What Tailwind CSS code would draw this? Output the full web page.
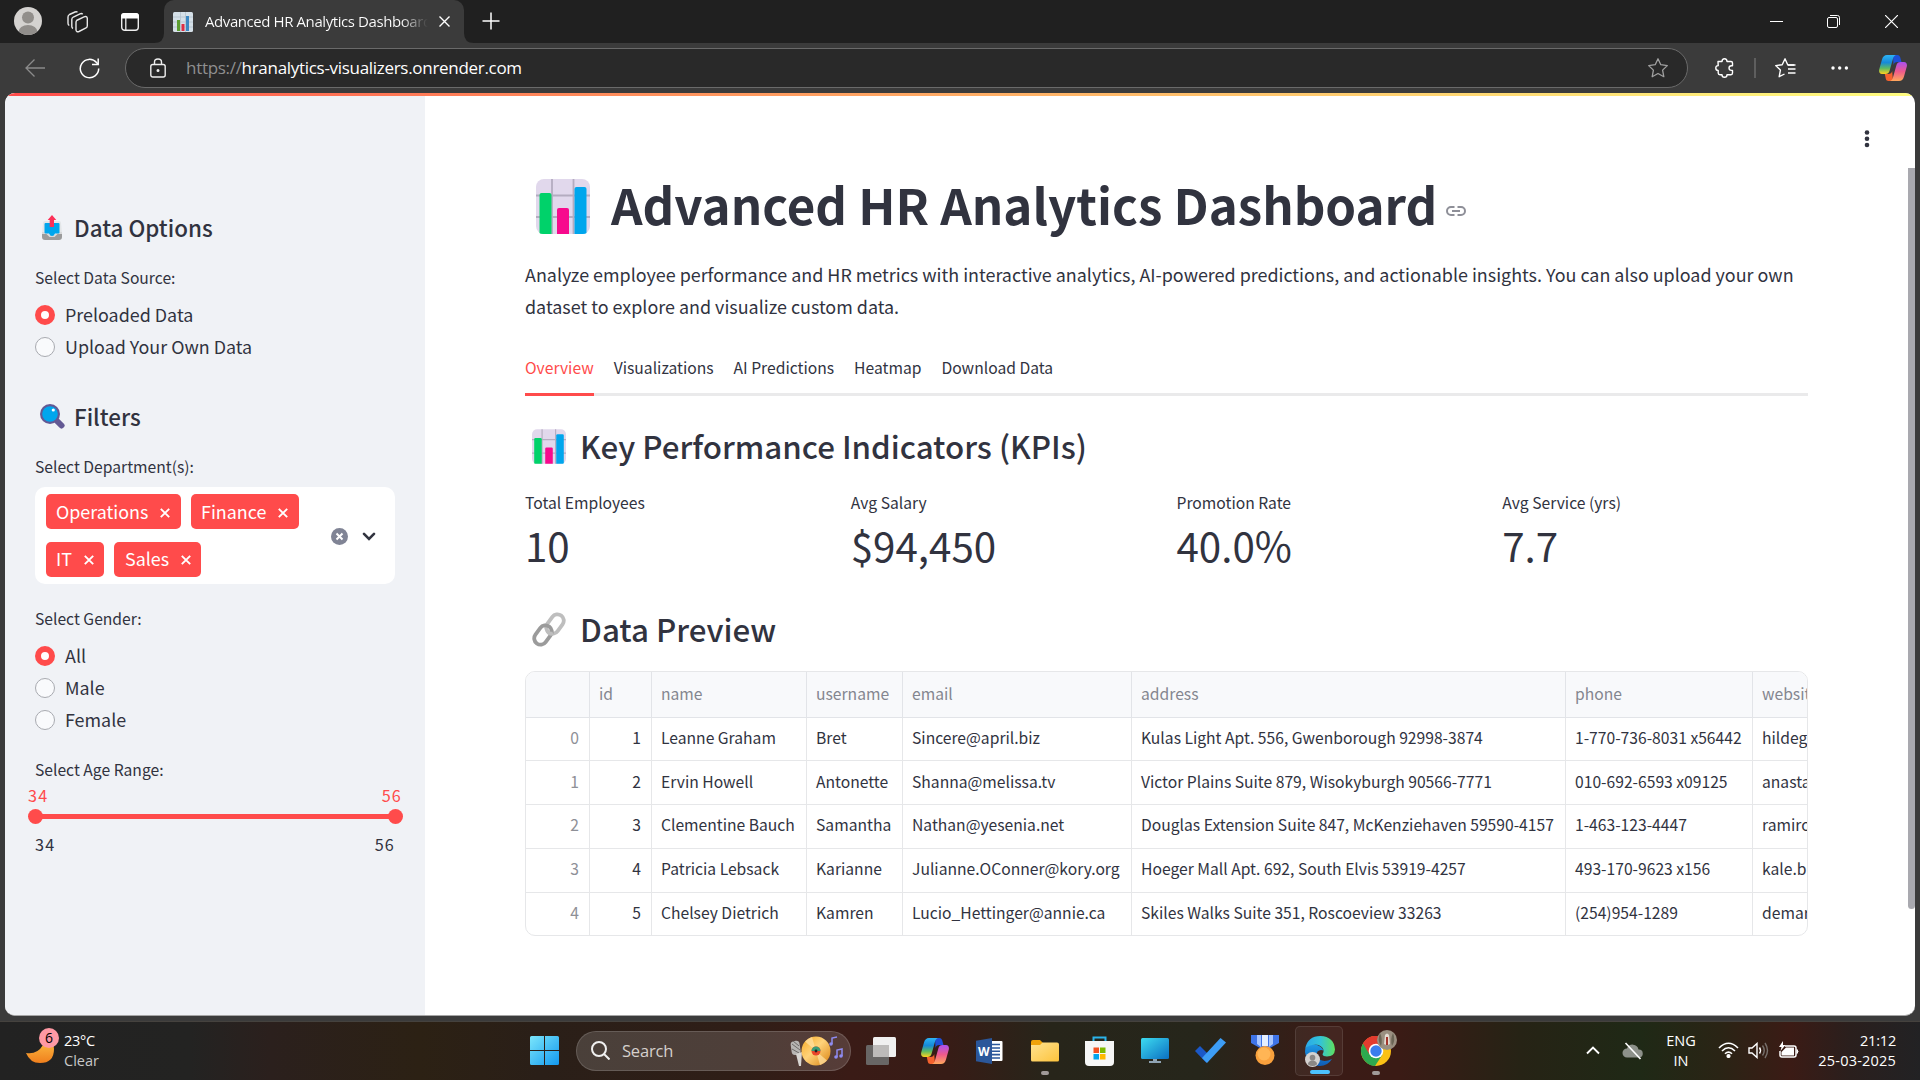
<!DOCTYPE html>
<html lang="en">
<head>
<meta charset="utf-8">
<title>Advanced HR Analytics Dashboard</title>
<script src="https://cdn.jsdelivr.net/npm/@tailwindcss/browser@4"></script>
</head>
<body class="w-[1920px] h-[1080px] overflow-hidden bg-[#3b3b3b] font-['Open_Sans',sans-serif] flex flex-col">
<svg width="0" height="0" class="absolute">
  <defs>
    <linearGradient id="cpA" x1="0" y1="0" x2="0" y2="1"><stop offset="0" stop-color="#2db4f5"/><stop offset=".4" stop-color="#1689d8"/><stop offset=".7" stop-color="#5dba62"/><stop offset="1" stop-color="#ffd21f"/></linearGradient>
    <linearGradient id="cpB" x1="0" y1="0" x2="0" y2="1"><stop offset="0" stop-color="#a950f0"/><stop offset=".5" stop-color="#ee5a8c"/><stop offset="1" stop-color="#ffa85c"/></linearGradient>
    <linearGradient id="winG" x1="0" y1="0" x2="1" y2="1"><stop offset="0" stop-color="#7be6fb"/><stop offset="1" stop-color="#1399ef"/></linearGradient>
    <linearGradient id="moonG" x1="0" y1="0" x2="0" y2="1"><stop offset="0" stop-color="#ffc94a"/><stop offset="1" stop-color="#f07f1d"/></linearGradient>
    <linearGradient id="edgeG" x1="0" y1="0" x2="1" y2="0"><stop offset="0" stop-color="#2aa8ea"/><stop offset=".5" stop-color="#33c3d8"/><stop offset="1" stop-color="#5fe05e"/></linearGradient>
    <linearGradient id="edgeB" x1="0" y1="0" x2="0" y2="1"><stop offset="0" stop-color="#1f9be6"/><stop offset="1" stop-color="#0f5bb5"/></linearGradient>
    <linearGradient id="monG" x1="0" y1="0" x2="1" y2="1"><stop offset="0" stop-color="#3ddcf0"/><stop offset="1" stop-color="#0b6fc2"/></linearGradient>
    <linearGradient id="foldG" x1="0" y1="0" x2="1" y2="1"><stop offset="0" stop-color="#ffe391"/><stop offset="1" stop-color="#fdc33c"/></linearGradient>
    <linearGradient id="discG" x1="0" y1="0" x2="1" y2="1"><stop offset="0" stop-color="#f7a921"/><stop offset=".45" stop-color="#ffd27a"/><stop offset="1" stop-color="#d9820f"/></linearGradient>
    <symbol id="chart" viewBox="0 0 54 55">
      <rect width="54" height="55" rx="8" fill="#e1d8ec"/>
      <path d="M16 0V55M37.500 0V55M0 16.500H54M0 38H54" stroke="#b4acc0" stroke-width="1.800"/>
      <path d="M3.500 16a2 2 0 0 1 2-2h8a2 2 0 0 1 2 2V55H7q-3 0-3.500-1z" fill="#00d26a"/>
      <path d="M21 31a2 2 0 0 1 2-2h8a2 2 0 0 1 2 2V55H21z" fill="#f70a8d"/>
      <path d="M38.500 10a2 2 0 0 1 2-2h8a2 2 0 0 1 2 2V54q-1 1-3.500 1h-8.500z" fill="#00a6ed"/>
    </symbol>
    <symbol id="copilot" viewBox="0 0 28 26">
      <path d="M14 0h4.500c1.500 0 2.300 1 2.700 2.300L22.500 7h-4c-2.500 0-3.500 1-4 3z" fill="#1d50d8"/>
      <path d="M8 0h9c-1.500.5-2.300 1.500-2.800 3L10.500 16c-.6 1.800-1.800 3-4 3H3C.5 19-.3 17 .2 14.500L3 4.500C3.800 1.500 5.500 0 8 0z" fill="url(#cpA)"/>
      <path d="M14 26H9.500C8 26 7.200 25 6.800 23.700L5.800 19h3.400c2.500 0 3.500-1 4-3z" fill="#f5622e"/>
      <path d="M20 26h-9c1.500-.5 2.300-1.500 2.800-3L17.500 10c.6-1.800 1.800-3 4-3H25c2.500 0 3.300 2 2.800 4.500L25 21.500c-.8 3-2.500 4.500-5 4.500z" fill="url(#cpB)"/>
    </symbol>
    <symbol id="tagx" viewBox="0 0 10 10"><path d="M.800.800L9.200 9.200M9.200.800L.800 9.200" stroke="#fff" stroke-width="1.900" fill="none"/></symbol>
  </defs>
</svg>

<!-- Tab strip -->
<header class="h-[43px] shrink-0 bg-[#202020] flex items-end text-white">
  <div class="w-[164px] h-full flex items-center pl-[14px]">
    <svg class="w-7 h-[28px] mt-[-1px]" viewBox="0 0 28 28"><clipPath id="av"><circle cx="14" cy="14" r="14"/></clipPath><g clip-path="url(#av)"><rect width="28" height="28" fill="#d4d2d0"/><circle cx="14" cy="10.500" r="6" fill="#918e8b"/><ellipse cx="14" cy="25" rx="9.500" ry="7" fill="#918e8b"/></g></svg>
    <svg class="w-[22px] h-[22px] ml-[25px]" viewBox="0 0 22 22" fill="none" stroke="#e8e8e8" stroke-width="1.400"><path d="M9.500 9.500 17 5.800q3-1 3.300 1.500v7.500q0 1.500-1.300 2.200L12 20.500q-2.700 1-3-1.500v-7.500q0-1.300.8-2z"/><path d="M6 17.500q-1.200-.6-1.200-2v-7q0-1.700 1.500-2.500L13 2.800q1.700-.7 2.700.4"/><path d="M2.300 14.500Q1 13.800 1 12.300V6q0-1.700 1.500-2.500L8 1q1.500-.6 2.500.2"/></svg>
    <svg class="w-[18px] h-[18px] ml-[32px]" viewBox="0 0 18 18"><rect x=".7" y=".7" width="16.600" height="16.600" rx="3" fill="none" stroke="#eee" stroke-width="1.400"/><path d="M0 5.500V3a3 3 0 0 1 3-3h12a3 3 0 0 1 3 3v2.500z" fill="#fff"/><path d="M4.800 5v12" stroke="#eee" stroke-width="1.300"/></svg>
  </div>
  <div class="relative w-[300px] h-full bg-[#3b3b3b] rounded-t-[10px] flex items-center pl-[9px]">
    <svg class="absolute bottom-0 -left-[10px] w-[10px] h-[10px]" viewBox="0 0 10 10"><path d="M10 0V10H0Q10 10 10 0z" fill="#3b3b3b"/></svg>
    <svg class="absolute bottom-0 -right-[10px] w-[10px] h-[10px]" viewBox="0 0 10 10"><path d="M0 0V10H10Q0 10 0 0z" fill="#3b3b3b"/></svg>
    <svg class="w-5 h-5" viewBox="0 0 20 20"><rect width="20" height="20" rx="1.500" fill="#d5e0e8"/><path d="M0 5H20M0 10H20M0 15H20M7.500 0V20M12.500 0V20" stroke="#b3c2cd" stroke-width=".8"/><path d="M4 8h3v11H4z" fill="#5c9e31"/><path d="M8.500 12h3v7h-3z" fill="#dd2e44"/><path d="M13 4h3v15h-3z" fill="#3b88c3"/></svg>
    <div class="ml-[12px] w-[223px] overflow-hidden whitespace-nowrap text-[15px] tracking-[-0.420px] leading-[22px] pb-[2px] bg-gradient-to-r from-white from-88% to-[#3b3b3b] bg-clip-text text-transparent">Advanced HR Analytics Dashboard</div>
    <svg class="w-[11px] h-[11px] ml-[11px]" viewBox="0 0 11 11"><path d="M.5.5l10 10M10.500.5l-10 10" stroke="#fff" stroke-width="1.400"/></svg>
  </div>
  <svg class="w-[18px] h-[18px] ml-[18px] mb-[13px]" viewBox="0 0 18 18"><path d="M9 .5v17M.5 9h17" stroke="#fff" stroke-width="1.500"/></svg>
  <div class="ml-auto h-full flex items-center pr-[22px]">
    <svg class="w-[13px] h-[13px]" viewBox="0 0 13 13"><path d="M0 6.500h13" stroke="#fff"/></svg>
    <svg class="w-[13px] h-[13px] ml-[44px]" viewBox="0 0 13 13" fill="none" stroke="#fff"><rect x=".5" y="2.500" width="10" height="10" rx="1.500"/><path d="M3 .5h7.500q2 0 2 2V10"/></svg>
    <svg class="w-[13px] h-[13px] ml-[45px]" viewBox="0 0 13 13"><path d="M0 0l13 13M13 0L0 13" stroke="#fff" stroke-width="1.200"/></svg>
  </div>
</header>

<!-- Toolbar -->
<nav class="h-[50px] shrink-0 bg-[#3b3b3b] flex items-center text-white">
  <svg class="w-5 h-[18px] ml-[25px]" viewBox="0 0 20 18" fill="none" stroke="#8b8b8b" stroke-width="1.300"><path d="M20 9H1M9.500.5L1 9l8.500 8.500"/></svg>
  <svg class="w-[21px] h-[21px] ml-[34px]" viewBox="0 0 21 21" fill="none" stroke="#fff" stroke-width="1.500"><path d="M19.700 10.500A9.200 9.200 0 1 1 17.500 4.600L19 6.300"/><path d="M19.200.5v6H13"/></svg>
  <div class="ml-[25px] w-[1563px] h-10 rounded-full border border-[#6a6a6a] bg-[#292929] flex items-center pl-[24px] pr-[19px]">
    <svg class="w-4 h-5" viewBox="0 0 16 20" fill="none" stroke="#eee" stroke-width="1.400"><rect x=".8" y="6.500" width="14.400" height="12.500" rx="2"/><path d="M4.500 6.500V4q0-3 3.500-3t3.500 3v2.500"/><circle cx="8" cy="12.500" r=".8" fill="#fff"/></svg>
    <div class="ml-[20px] text-[17px] leading-6 tracking-[-0.300px] whitespace-nowrap"><span class="text-[#8f8f8f]">https://</span><span>hranalytics-visualizers.onrender.com</span></div>
    <svg class="ml-auto w-5 h-5" viewBox="0 0 20 20" fill="none" stroke="#a0a0a0" stroke-width="1.300" stroke-linejoin="round"><path d="M10 .8l2.800 5.900 6.500.9-4.700 4.500 1.200 6.600L10 15.500l-5.800 3.200 1.200-6.600L.7 7.600l6.500-.9z"/></svg>
  </div>
  <svg class="ml-[27px] w-[19px] h-5" viewBox="0 0 19 20" fill="none" stroke="#fff" stroke-width="1.400" stroke-linejoin="round"><path d="M3 3.500h4q0-2.800 2.500-2.800T12 3.500h4q1.500 0 1.500 1.500v2.800h-1q-2.500 0-2.500 2.300t2.500 2.300h1V15q0 1.700-1.500 1.700h-4q0 2.600-2.500 2.600T7 16.700H5q-1.800 0-1.800-1.700v-2.500Q.8 12.500.8 10t2.400-2.400z"/></svg>
  <div class="ml-[20px] w-[2px] h-5 bg-[#5e5e5e]"></div>
  <svg class="ml-[19px] w-[21px] h-5" viewBox="0 0 21 20" fill="none" stroke="#fff" stroke-width="1.400" stroke-linejoin="round"><path d="M19 7h-6.200L10 .8 7.200 6.700.7 7.600l4.700 4.500-1.200 6.600L9.500 16"/><path d="M13 7h7.500M13 11h7.500M13 15h7.500" stroke-width="1.500"/></svg>
  <svg class="ml-[35px] w-[18px] h-[4px]" viewBox="0 0 18 4" fill="#fff"><circle cx="2" cy="2" r="1.700"/><circle cx="8.700" cy="2" r="1.700"/><circle cx="15.400" cy="2" r="1.700"/></svg>
  <svg class="ml-[30px] w-7 h-[26px]"><use href="#copilot"/></svg>
</nav>

<!-- Page -->
<main class="relative ml-[5px] w-[1910px] h-[923px] shrink-0 rounded-[10px] overflow-hidden bg-white border-b border-[#a5a5a5] flex font-['Noto_Sans_CJK_SC',sans-serif] text-[#31333f]">
  <div class="absolute inset-x-0 top-0 h-[3px] bg-gradient-to-r from-[#ff4b4b] to-[#fffd80]"></div>

  <aside class="w-[420px] shrink-0 bg-[#f0f2f6] pl-[30px] pr-[30px] pt-[119px]">
    <h2 class="flex items-center h-[30px] text-[22.400px] font-medium leading-[30px]">
      <svg class="w-[20px] h-[25px] ml-[7px] mr-[12px]" viewBox="0 0 20 25"><path d="M1 8q0-2 2-2h14q2 0 2 2l1 10H0z" fill="#e3e6e8"/><path d="M0 17h4.500l3 3.500h5l3-3.500H20v5q0 3-3 3H3q-3 0-3-3z" fill="#9b9b9b"/><path d="M0 17h5l3 3h4l3-3h5v2h-4.500l-3 3h-5l-3-3H0z" fill="#d9dadb"/><path d="M2.500 9q0-1 1-1h13q1 0 1 1v8.500q0 1-1 1H13q-1 2.500-3 2.500t-3-2.500H3.500q-1 0-1-1z" fill="#00a6ed"/><path d="M10 0l4.300 5H12v7H7.700V5H5.700z" fill="#fc3158"/></svg>
      <span class="whitespace-nowrap">Data Options</span>
    </h2>
    <div class="mt-[25px] h-[22px] leading-[22px] text-[15.670px]">Select Data Source:</div>
    <div class="mt-[10px] text-[17.900px]">
      <div class="h-8 flex items-center gap-[10px]"><span class="w-5 h-5 rounded-full border-6 border-[#ff4b4b] bg-white"></span><span class="leading-[30px] pb-[2px]">Preloaded Data</span></div>
      <div class="h-8 flex items-center gap-[10px]"><span class="w-5 h-5 rounded-full border border-[#a8aab0] bg-[#f9fafc]"></span><span class="leading-[30px] pb-[2px]">Upload Your Own Data</span></div>
    </div>
    <h2 class="mt-[38px] flex items-center h-[30px] text-[22.400px] font-medium leading-[30px]">
      <svg class="w-[25px] h-[25px] ml-[5px] mr-[9px]" viewBox="0 0 25 25"><path d="M17.500 17.500l4 4" stroke="#635994" stroke-width="6" stroke-linecap="round"/><circle cx="10" cy="10" r="10" fill="#635994"/><circle cx="10" cy="10" r="7.800" fill="#00a6ed"/><circle cx="13.300" cy="6" r="1.600" fill="#fff"/></svg>
      <span>Filters</span>
    </h2>
    <div class="mt-[25px] h-[22px] leading-[22px] text-[15.670px]">Select Department(s):</div>
    <div class="mt-[9px] h-[97px] rounded-[10px] bg-white flex items-center pl-[11px] pr-[19px]">
      <div class="flex flex-wrap w-[270px] gap-x-[10px] gap-y-[13px] text-white text-[17.900px] leading-[33px]">
        <div class="h-[35px] w-[135px] rounded-[5px] bg-[#ff4b4b] flex items-center justify-between pl-[10px] pr-[11px]"><span>Operations</span><svg class="w-[10px] h-[10px] mt-[2px]"><use href="#tagx"/></svg></div>
        <div class="h-[35px] w-[108px] rounded-[5px] bg-[#ff4b4b] flex items-center justify-between pl-[10px] pr-[11px]"><span>Finance</span><svg class="w-[10px] h-[10px] mt-[2px]"><use href="#tagx"/></svg></div>
        <div class="h-[35px] w-[58px] rounded-[5px] bg-[#ff4b4b] flex items-center justify-between pl-[10px] pr-[10px]"><span class="pb-[2px]">IT</span><svg class="w-[10px] h-[10px]"><use href="#tagx"/></svg></div>
        <div class="h-[35px] w-[87px] rounded-[5px] bg-[#ff4b4b] flex items-center justify-between pl-[11px] pr-[10px]"><span class="pb-[2px]">Sales</span><svg class="w-[10px] h-[10px]"><use href="#tagx"/></svg></div>
      </div>
      <svg class="w-[17px] h-[17px] ml-auto mt-[1px]" viewBox="0 0 17 17"><circle cx="8.500" cy="8.500" r="8.500" fill="#808495"/><path d="M5.500 5.500l6 6M11.500 5.500l-6 6" stroke="#fff" stroke-width="2"/></svg>
      <svg class="w-[14px] h-[9px] ml-[14px] mt-[1px]" viewBox="0 0 14 9"><path d="M2 1.800l5 5 5-5" fill="none" stroke="#31333f" stroke-width="2.600" stroke-linecap="round"/></svg>
    </div>
    <div class="mt-[24px] h-[22px] leading-[22px] text-[15.670px]">Select Gender:</div>
    <div class="mt-[10px] text-[17.900px]">
      <div class="h-8 flex items-center gap-[10px]"><span class="w-5 h-5 rounded-full border-6 border-[#ff4b4b] bg-white"></span><span class="leading-[30px] pb-[2px]">All</span></div>
      <div class="h-8 flex items-center gap-[10px]"><span class="w-5 h-5 rounded-full border border-[#a8aab0] bg-[#f9fafc]"></span><span class="leading-[30px] pb-[2px]">Male</span></div>
      <div class="h-8 flex items-center gap-[10px]"><span class="w-5 h-5 rounded-full border border-[#a8aab0] bg-[#f9fafc]"></span><span class="leading-[30px] pb-[2px]">Female</span></div>
    </div>
    <div class="mt-[23px] h-[22px] leading-[22px] text-[15.670px]">Select Age Range:</div>
    <div class="mt-[3px] -mx-[7px] h-[22px] leading-[22px] text-[16.200px] tracking-[1.200px] text-[#ff4b4b] flex justify-between"><span>34</span><span>56</span></div>
    <div class="mt-[3px] -mx-[7.500px] h-[15px] flex items-center">
      <span class="w-[15px] h-[15px] rounded-full bg-[#ff4b4b]"></span><span class="flex-1 h-[5px] -mx-1 bg-[#ff4b4b]"></span><span class="w-[15px] h-[15px] rounded-full bg-[#ff4b4b]"></span>
    </div>
    <div class="mt-[9px] h-[22px] leading-[22px] text-[16.200px] tracking-[1.200px] flex justify-between"><span>34</span><span>56</span></div>
  </aside>

  <section class="pl-[100px] pt-[78px] w-[1383px] shrink-0">
    <h1 class="h-[66px] flex items-center text-[49.250px] leading-[66px] font-bold whitespace-nowrap">
      <svg class="w-[54px] h-[55px] ml-[11px] mr-[21px] mt-[4px]"><use href="#chart"/></svg>
      <span>Advanced HR Analytics Dashboard</span>
      <svg class="w-[20px] h-[10px] ml-[9px] mt-[14px]" viewBox="0 0 20 10" fill="none" stroke="#8e8f98" stroke-width="2"><path d="M8.500 1H5a4 4 0 0 0 0 8h3.500M11.500 1H15a4 4 0 0 1 0 8h-3.500M6 5h8"/></svg>
    </h1>
    <p class="mt-[21px] h-16 text-[17.910px] leading-8 whitespace-nowrap">Analyze employee performance and HR metrics with interactive analytics, AI-powered predictions, and actionable insights. You can also upload your own<br>dataset to explore and visualize custom data.</p>
    <div class="mt-[20px] h-[54px] border-b-[3px] border-[#eaeaeb] flex gap-5 text-[15.670px] leading-[52px] whitespace-nowrap">
      <span class="h-[54px] border-b-[3px] border-[#ff4b4b] text-[#ff4b4b]">Overview</span><span>Visualizations</span><span>AI Predictions</span><span>Heatmap</span><span>Download Data</span>
    </div>
    <h2 class="mt-[28px] h-[44px] flex items-center text-[31.300px] leading-[44px] font-medium whitespace-nowrap">
      <svg class="w-[34px] h-[35px] ml-[7px] mr-[14px]"><use href="#chart"/></svg>
      <span>Key Performance Indicators (KPIs)</span>
    </h2>
    <div class="mt-6 grid grid-cols-4 gap-x-5">
      <div><div class="h-[22px] text-[15.670px] leading-[22px]">Total Employees</div><div class="mt-[3px] h-14 text-[40.300px] leading-[56px]">10</div></div>
      <div><div class="h-[22px] text-[15.670px] leading-[22px]">Avg Salary</div><div class="mt-[3px] h-14 text-[40.300px] leading-[56px]">$94,450</div></div>
      <div><div class="h-[22px] text-[15.670px] leading-[22px]">Promotion Rate</div><div class="mt-[3px] h-14 text-[40.300px] leading-[56px]">40.0%</div></div>
      <div><div class="h-[22px] text-[15.670px] leading-[22px]">Avg Service (yrs)</div><div class="mt-[3px] h-14 text-[40.300px] leading-[56px]">7.7</div></div>
    </div>
    <h2 class="mt-[34px] h-[44px] flex items-center text-[31.300px] leading-[44px] font-medium whitespace-nowrap">
      <svg class="w-[34px] h-[35px] ml-[7px] mr-[14px]" viewBox="0 0 34 35" fill="none" stroke-width="3.800"><rect x="-6.300" y="-10.500" width="12.600" height="21" rx="6.300" transform="translate(23 12) rotate(36)" stroke="#bebebe"/><rect x="-6.300" y="-10.500" width="12.600" height="21" rx="6.300" transform="translate(11 23) rotate(36)" stroke="#9b9b9b"/><path d="M15.500 19.500q2 3.200 5.500 1.800" stroke="#bebebe"/></svg>
      <span>Data Preview</span>
    </h2>
    <div class="mt-[20px] h-[265px] w-[1283px] rounded-[10px] border border-[#e6e7e9] overflow-hidden">
      <table class="w-[1363px] table-fixed border-collapse text-[15.670px] whitespace-nowrap [&_td]:h-[43.800px] [&_td]:p-0 [&_td]:px-[9.500px] [&_td]:pb-[2px] [&_td]:leading-[20px] [&_td]:border-r [&_td]:border-b [&_td]:border-[#e6e7e9] [&_th]:h-[45px] [&_th]:p-0 [&_th]:px-[9.500px] [&_th]:pb-[1px] [&_th]:leading-[20px] [&_th]:font-normal [&_th]:text-left [&_th]:border-r [&_th]:border-b [&_th]:border-[#e2e4e8] [&_td:nth-child(-n+2)]:text-right [&_td:first-child]:text-[#8e9097]">
        <colgroup><col class="w-[63px]"><col class="w-[62px]"><col class="w-[155px]"><col class="w-[96px]"><col class="w-[229px]"><col class="w-[434px]"><col class="w-[187px]"><col class="w-[137px]"></colgroup>
        <thead class="bg-[#f8f9fb] text-[#84868f]"><tr><th></th><th>id</th><th>name</th><th>username</th><th>email</th><th>address</th><th>phone</th><th>website</th></tr></thead>
        <tbody>
          <tr><td>0</td><td>1</td><td>Leanne Graham</td><td>Bret</td><td>Sincere@april.biz</td><td>Kulas Light Apt. 556, Gwenborough 92998-3874</td><td>1-770-736-8031 x56442</td><td>hildegard.org</td></tr>
          <tr><td>1</td><td>2</td><td>Ervin Howell</td><td>Antonette</td><td>Shanna@melissa.tv</td><td>Victor Plains Suite 879, Wisokyburgh 90566-7771</td><td>010-692-6593 x09125</td><td>anastasia.net</td></tr>
          <tr><td>2</td><td>3</td><td>Clementine Bauch</td><td>Samantha</td><td>Nathan@yesenia.net</td><td>Douglas Extension Suite 847, McKenziehaven 59590-4157</td><td>1-463-123-4447</td><td>ramiro.info</td></tr>
          <tr><td>3</td><td>4</td><td>Patricia Lebsack</td><td>Karianne</td><td>Julianne.OConner@kory.org</td><td>Hoeger Mall Apt. 692, South Elvis 53919-4257</td><td>493-170-9623 x156</td><td>kale.biz</td></tr>
          <tr><td>4</td><td>5</td><td>Chelsey Dietrich</td><td>Kamren</td><td>Lucio_Hettinger@annie.ca</td><td>Skiles Walks Suite 351, Roscoeview 33263</td><td>(254)954-1289</td><td>demarco.info</td></tr>
        </tbody>
      </table>
    </div>
  </section>

  <div class="ml-auto w-[107px] flex justify-end">
    <svg class="w-[6px] h-[18px] mt-[37px] mr-[38px]" viewBox="0 0 6 18" fill="#31333f"><circle cx="3" cy="2.500" r="2.300"/><circle cx="3" cy="8.800" r="2.300"/><circle cx="3" cy="15" r="2.300"/></svg>
    <div class="w-[7px] h-[741px] mt-[75px] rounded-b-[4px] bg-[#a9a9af]"></div>
  </div>
</main>

<!-- Taskbar -->
<footer class="mt-[5px] h-[59px] shrink-0 border-t border-[#45423e] flex items-center text-white text-[14.500px] leading-5 pb-[1px] bg-[linear-gradient(90deg,#222_0px,#232322_190px,#2b201d_270px,#2c2114_420px,#2a1f18_540px,#2f1e17_740px,#3a1b16_850px,#371c16_950px,#27251a_1050px,#26261b_1200px,#3a1b16_1330px,#3a1b15_1400px,#262315_1520px,#1f2916_1640px,#2a2415_1720px,#3b1b15_1790px,#2a1f1d_1850px,#222224_1920px)]">
  <div class="w-[530px] h-full flex items-center pl-[26px] relative">
    <svg class="w-7 h-[28px] mt-[-1px]" viewBox="0 0 28 28"><path d="M0 17q11 2 17-8 3-4 2-9 9 4 9 13 0 14-14 14Q4 27 0 17z" fill="url(#moonG)"/></svg>
    <div class="absolute left-[39px] top-[6px] w-5 h-5 rounded-full bg-[#ff99a4] text-black text-center text-[14px] leading-5">6</div>
    <div class="ml-[10px]"><div class="tracking-[-0.300px]">23°C</div><div class="text-[#c8c8c8]">Clear</div></div>
  </div>
  <svg class="w-[29px] h-[29px]" viewBox="0 0 29 29" fill="url(#winG)"><path d="M0 1.500Q0 0 1.500 0H14v14H0zM15 0h12.500Q29 0 29 1.500V14H15zM0 15h14v14H1.500Q0 29 0 27.500zM15 15h14v12.500q0 1.500-1.500 1.500H15z"/></svg>
  <div class="ml-[17px] w-[275px] h-10 rounded-full border border-white/15 bg-white/15 flex items-center pl-[14px] pr-[6px]">
    <svg class="w-[19px] h-[19px]" viewBox="0 0 19 19" fill="none" stroke="#f0f0f0" stroke-width="2"><circle cx="8" cy="8" r="7"/><path d="M13 13l5.500 5.500"/></svg>
    <span class="ml-[12px] text-[16.500px] text-[#d5d0cc] tracking-[-0.200px]">Search</span>
    <svg class="ml-auto w-[54px] h-[32px]" viewBox="0 0 54 32"><rect x="1" y="6" width="9" height="14" rx="3.500" fill="#b8b5b3" transform="rotate(-8 5 12)"/><path d="M2 9l8 6M2 14l7 4M3 6l6 5" stroke="#6d6a68" stroke-width="1"/><path d="M6 19l6-2-1 14H9z" fill="#d8d5d2"/><circle cx="26" cy="16" r="14.500" fill="url(#discG)"/><path d="M26 16L15 6.500q3-3.500 7-4.500zM26 16l11 9.500q-3 3.500-7 4.500z" fill="#ffe3a6" opacity=".7"/><circle cx="26" cy="16" r="4.500" fill="#e8452b"/><path d="M21.500 16a4.500 4.500 0 0 1 9 0z" fill="#3a9e78"/><circle cx="26" cy="16" r="1.400" fill="#222"/><path d="M42 9V3l5-1M47 22v-7l5-1v7" stroke="#8f8bf0" stroke-width="1.500" fill="none"/><circle cx="41" cy="9" r="1.800" fill="#8f8bf0"/><circle cx="46" cy="22" r="1.800" fill="#8f8bf0"/><circle cx="51" cy="21" r="1.800" fill="#8f8bf0"/></svg>
  </div>
  <svg class="ml-[15px] w-[30px] h-[28px]" viewBox="0 0 30 28"><rect y="8" width="23" height="20" rx="1.500" fill="#686665"/><rect x="7" width="23" height="20" rx="1.500" fill="#f0f0f0"/><path d="M7 8h16v12H7z" fill="#bdbbba"/></svg>
  <svg class="ml-[25px] w-[28px] h-[26px]"><use href="#copilot"/></svg>
  <svg class="ml-[27px] w-[27px] h-[26px]" viewBox="0 0 27 26"><rect x="14" y="3" width="12.500" height="20" rx="1" fill="#fff"/><path d="M16 6.500h8M16 10h8M16 13.300h8M16 16.600h8M16 20h8" stroke="#2b579a" stroke-width="1.600"/><path d="M0 2.700L16 0v26L0 23.300z" fill="#2b579a"/><text x="7.700" y="17.500" text-anchor="middle" font-family="Open Sans" font-weight="700" font-size="12" fill="#fff">W</text></svg>
  <div class="relative ml-[28px] w-[28px] h-[24px]"><svg class="w-full h-full" viewBox="0 0 28 24"><path d="M0 3q0-2 2-2h7l3 3v5H0z" fill="#f0a30a"/><path d="M0 6h9l2.500-2.500H26q2 0 2 2V21q0 1.500-1.500 1.500h-25Q0 22.500 0 21z" fill="url(#foldG)"/></svg><span class="absolute left-[10px] top-[32px] w-[8px] h-[4px] rounded-full bg-[#a09a98]"></span></div>
  <svg class="ml-[26px] w-[29px] h-[30px]" viewBox="0 0 29 30"><path d="M8.500 6V1.500h12V6" fill="none" stroke="#2bb3ea" stroke-width="2"/><path d="M0 5h29v21q0 4-4 4H4q-4 0-4-4z" fill="#f6f6f6"/><path d="M8.500 11.500h5.500V17H8.500z" fill="#f25022"/><path d="M15 11.500h5.500V17H15z" fill="#7fba00"/><path d="M8.500 18h5.500v5.500H8.500z" fill="#00a4ef"/><path d="M15 18h5.500v5.500H15z" fill="#ffb900"/></svg>
  <svg class="ml-[27px] w-[28px] h-[25px] mt-[-1px]" viewBox="0 0 28 25"><rect width="28" height="21" rx="1.500" fill="url(#monG)"/><path d="M12 21h4v2h4v2H8v-2h4z" fill="#8fa3b3"/></svg>
  <svg class="ml-[26px] w-[31px] h-[25px] mt-[-1px]" viewBox="0 0 31 25"><path d="M0 13l5-5 9 9-2.500 8z" fill="#1b58c7"/><path d="M7 20L25.500 0 31 4.500 12 25z" fill="#3d9df5"/></svg>
  <svg class="ml-[24px] w-[30px] h-[30px] mt-[-1px]" viewBox="0 0 30 30"><path d="M1 0h28v8L20 13H10L1 8z" fill="#3f74e8"/><path d="M7 0h4v12l-4-3zM19 0h4v9l-4 3z" fill="#a9c6ff"/><path d="M12 0h6v11h-6z" fill="#e6efff"/><circle cx="15" cy="20.500" r="9.500" fill="#f9a03c"/><circle cx="14" cy="19" r="6.500" fill="#ffb555"/></svg>
  <div class="relative ml-[15px] w-[48px] h-[50px] rounded-[5px] border border-white/10 bg-white/5 flex items-center">
    <svg class="w-[30px] h-[30px] ml-[9px]" viewBox="0 0 30 30"><path d="M.3 12.500Q4 7 11 8.500q6 2 7.500 6-3.500-1.500-6 1-2.500 4.500 2 8 5 3 12.500-.5Q22.500 30 15 30 2 29.500 0 16z" fill="url(#edgeB)"/><path d="M.3 12.500Q2.500 0 15.500 0 29 .5 30 13.500q-.5 7-8 7-4 0-4.500-2.200 1.500-2 1-4.300Q17 9 10.500 8.500 3.500 9 .3 12.500z" fill="url(#edgeG)"/></svg>
    <svg class="absolute left-[9px] top-[25px] w-[15px] h-[15px]" viewBox="0 0 16 16"><circle cx="8" cy="8" r="8" fill="#d4d2d0"/><circle cx="8" cy="6" r="3" fill="#8a8785"/><path d="M3 13q1-4 5-4t5 4q-5 4-10 0z" fill="#8a8785"/></svg>
    <span class="absolute left-[14px] bottom-[1px] w-5 h-1 rounded-full bg-[#4cc2ff]"></span>
  </div>
  <div class="relative ml-[18px] w-[36px] h-[42px] flex items-center">
    <svg class="w-[30px] h-[30px]" viewBox="0 0 30 30"><circle cx="15" cy="15" r="15" fill="#fbc116"/><path d="M15 15L2 7.500A15 15 0 0 1 28 7.500z" fill="#e33b2e"/><path d="M15 15L2 7.500A15 15 0 0 0 14 30l7.500-11.500z" fill="#2da94f"/><path d="M15 7.500h13A15 15 0 0 0 2 7.500l6.500 11z" fill="#e33b2e"/><circle cx="15" cy="15" r="7.300" fill="#fff"/><circle cx="15" cy="15" r="5.700" fill="#3b7ded"/></svg>
    <svg class="absolute left-[16px] top-0 w-[20px] h-[20px]" viewBox="0 0 20 20"><circle cx="10" cy="10" r="10" fill="#9a8f80"/><path d="M3 3q3 6 1 13-4-6-1-13zM16 3q-3 6-1 13 4-6 1-13z" fill="#6b6555"/><path d="M8 5q2-3 4 0l1 9q-3 2-6 0z" fill="#e4dcd2"/><path d="M9 7h2v8H9z" fill="#a3342b"/></svg>
    <span class="absolute left-[11px] top-[41px] w-[8px] h-[4px] rounded-full bg-[#a09a98]"></span>
  </div>
  <div class="ml-auto h-full flex items-center pr-[24px]">
    <svg class="w-[14px] h-[9px]" viewBox="0 0 14 9"><path d="M1 7.500l6-6 6 6" fill="none" stroke="#fff" stroke-width="1.900"/></svg>
    <svg class="ml-[22px] w-[22px] h-[18px]" viewBox="0 0 22 18"><path d="M5 15.500a4.500 4.500 0 0 1 0-9 6 6 0 0 1 11.500 1 4 4 0 0 1 .5 8z" fill="#8d918a"/><path d="M3.500 1l15 16" stroke="#fff" stroke-width="1.700"/></svg>
    <div class="ml-[21px] w-[32px] text-center"><div>ENG</div><div>IN</div></div>
    <svg class="ml-[21px] w-[21px] h-[16px] mt-[-1px]" viewBox="0 0 21 16" fill="none" stroke="#fff" stroke-width="1.600"><path d="M1 6q9.500-9.500 19 0M4 9q6.500-6.500 13 0M7 11.800q3.500-3.500 7 0"/><circle cx="10.500" cy="14" r="1.300" fill="#fff"/></svg>
    <svg class="ml-[9px] w-[21px] h-[17px]" viewBox="0 0 21 17" fill="none" stroke="#fff" stroke-width="1.400"><path d="M1 6h3l5-4.500v14L4 11H1z"/><path d="M11.500 5.500q2 3 0 6"/><path d="M14.500 3.500q3.500 5 0 10M17 1q5 7.500 0 15" stroke="#77706c"/></svg>
    <svg class="ml-[9px] w-[21px] h-[17px] mt-[-2px]" viewBox="0 0 21 17"><path d="M7 5h9q2 0 2 2v7q0 2-2 2H4q-2 0-2-2v-4" fill="none" stroke="#fff" stroke-width="1.500"/><path d="M8 6.500h8v8H3.500V11z" fill="#fff"/><path d="M19 8.500q2 2 0 4z" fill="#fff" stroke="#fff"/><path d="M5 0L1 6h2.500L2.500 10 7.500 4H5z" fill="#fff"/></svg>
    <div class="ml-[19px] w-[78px] text-right whitespace-nowrap"><div class="tracking-[-0.200px]">21:12</div><div class="tracking-[0.200px]">25-03-2025</div></div>
  </div>
</footer>
</body>
</html>
